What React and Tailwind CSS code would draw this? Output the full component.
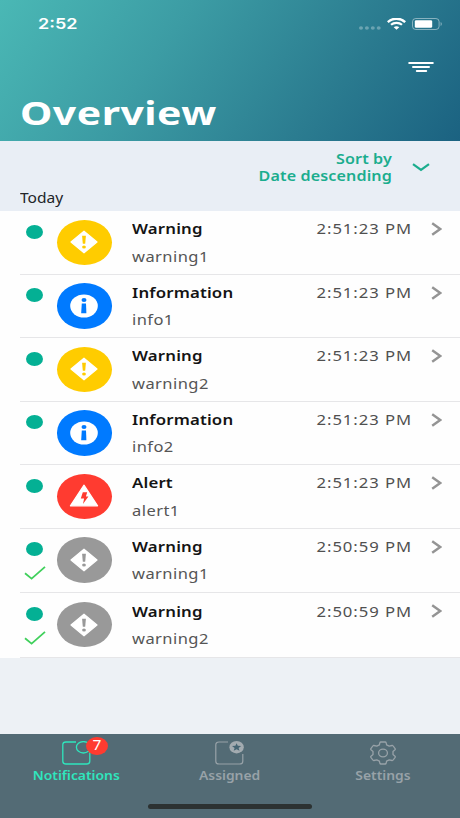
import React, { useState } from 'react';

const notifications = [
  { id: 1, type: 'warning', title: 'Warning', text: 'warning1', time: '2:51:23 PM' },
  { id: 2, type: 'info', title: 'Information', text: 'info1', time: '2:51:23 PM' },
  { id: 3, type: 'warning', title: 'Warning', text: 'warning2', time: '2:51:23 PM' },
  { id: 4, type: 'info', title: 'Information', text: 'info2', time: '2:51:23 PM' },
  { id: 5, type: 'alert', title: 'Alert', text: 'alert1', time: '2:51:23 PM' },
  { id: 6, type: 'done', title: 'Warning', text: 'warning1', time: '2:50:59 PM' },
  { id: 7, type: 'done', title: 'Warning', text: 'warning2', time: '2:50:59 PM' },
];

const badgeColors = {
  warning: 'bg-[#ffcc00] text-[#ffcc00]',
  info: 'bg-[#007aff] text-[#007aff]',
  alert: 'bg-[#ff3b30] text-[#ff3b30]',
  done: 'bg-[#999999] text-[#999999]',
};

function BadgeIcon({ type }) {
  if (type === 'info') {
    return (
      <svg width="28" height="24" viewBox="0 0 28 24">
        <ellipse cx="14" cy="12" rx="13.8" ry="11.5" fill="#fff" />
        <ellipse cx="14" cy="6.1" rx="2.5" ry="2" fill="currentColor" />
        <path d="M11.8 9.4h4.2l.4 9.9h-5.2z" fill="currentColor" />
      </svg>
    );
  }
  if (type === 'alert') {
    return (
      <svg width="30" height="24" viewBox="0 0 30 24">
        <path d="M15 1.2 28.6 21.8H1.4z" fill="#fff" stroke="#fff" strokeWidth="1.2" strokeLinejoin="round" />
        <path d="M13.8 8.2h4.4l-1.3 4.2h2.5l-5.4 7.6 1.1-5.6h-3.3z" fill="currentColor" />
      </svg>
    );
  }
  return (
    <svg width="28" height="24" viewBox="0 0 28 24">
      <path d="M14 1.2 27 12 14 22.8 1 12z" fill="#fff" stroke="#fff" strokeWidth="1.2" strokeLinejoin="round" />
      <path d="M12.1 5.8h3.8l-.7 8h-2.4z" fill="currentColor" />
      <ellipse cx="14" cy="16.9" rx="1.9" ry="1.5" fill="currentColor" />
    </svg>
  );
}

function StatusBar() {
  return (
    <div className="flex items-center justify-between pt-[14px] pl-[38px] pr-[17px] h-[34px] text-white">
      <span className="inline-block origin-left scale-x-[1.2] font-['Inter',sans-serif] text-[15px] leading-5 font-semibold">2:52</span>
      <div className="flex items-center">
        <svg width="22" height="4" viewBox="0 0 22 4" className="mt-[7px] mr-[6px]" fill="#fff" opacity="0.3">
          <ellipse cx="2" cy="2" rx="2" ry="1.7" />
          <ellipse cx="7.9" cy="2" rx="2" ry="1.7" />
          <ellipse cx="13.8" cy="2" rx="2" ry="1.7" />
          <ellipse cx="19.7" cy="2" rx="2" ry="1.7" />
        </svg>
        <svg width="19" height="12" viewBox="0 0 19 12" className="mr-[6px]" fill="none" stroke="#fff">
          <path d="M.8 4.1C5.6-.4 13.4-.4 18.2 4.1" strokeWidth="2.4" />
          <path d="M4 6.8c3-2.7 8-2.7 11 0" strokeWidth="2.2" />
          <path d="M6.7 9.3c1.6-1.4 4-1.4 5.6 0L9.5 11.7z" fill="#fff" stroke="none" />
        </svg>
        <svg width="31" height="12" viewBox="0 0 31 12">
          <rect x=".5" y=".5" width="26.6" height="11" rx="3.2" fill="none" stroke="#fff" strokeOpacity=".45" />
          <rect x="2.8" y="2.2" width="17.4" height="7.6" rx="1.4" fill="#fff" />
          <path d="M28.6 4v4c1.6-.6 1.6-3.4 0-4z" fill="#fff" fillOpacity=".45" />
        </svg>
      </div>
    </div>
  );
}

function NotificationRow({ item }) {
  const done = item.type === 'done';
  return (
    <li className={`flex pl-5 ${done ? 'h-[64.75px]' : 'h-[63.5px]'}`}>
      <div className="flex flex-1 border-b border-[#e6e6e8]">
        <div className="flex w-[29px] flex-col items-center pt-[13.5px]">
          <span className="h-[14px] w-[17px] rounded-[50%] bg-[#04b094]" />
          {done && (
            <svg width="22" height="14" viewBox="0 0 22 14" className="mt-[10px]" fill="none" stroke="#40d05c" strokeWidth="1.8">
              <path d="M1 7.2l6.6 5.4L21 .9" />
            </svg>
          )}
        </div>
        <div className={`mt-[8.5px] ml-[7.5px] flex h-[45.5px] w-[55.5px] items-center justify-center rounded-[50%] ${badgeColors[item.type]}`}>
          <BadgeIcon type={item.type} />
        </div>
        <div className="ml-[19.5px] flex flex-1 flex-col pt-[6.3px]">
          <span className="origin-left scale-x-[1.12] text-[15px] leading-[22px] font-semibold tracking-[0.15px] text-[#141414]">{item.title}</span>
          <span className="mt-[5.5px] origin-left scale-x-[1.1] text-[15px] leading-[22px] tracking-[0.4px] text-[#555555]">{item.text}</span>
        </div>
        <span className="mt-[6.3px] origin-right scale-x-[1.15] text-[14.5px] leading-[22px] tracking-[0.8px] text-[#505050]">{item.time}</span>
        <svg width="11" height="14" viewBox="0 0 11 14" className="mt-[11px] mr-[18.5px] ml-[19px]" fill="none" stroke="#949494" strokeWidth="2.4">
          <path d="M1.2 1.2 9.2 7l-8 5.8" />
        </svg>
      </div>
    </li>
  );
}

function NotificationsIcon() {
  return (
    <div className="relative h-[24px] w-[29px]">
      <svg width="29" height="24" viewBox="0 0 29 24" fill="none" stroke="currentColor" strokeWidth="1.3">
        <path d="M14 1H4C2 1 .8 2 .8 3.8v16.4C.8 22 2 23 4 23h20.6c2 0 3.200-1 3.200-2.800V11" />
        <ellipse cx="21.4" cy="6.3" rx="7" ry="5.7" />
      </svg>
      <span className="absolute -top-[4.5px] left-[24px] flex h-[18.5px] w-[22px] items-center justify-center rounded-[50%] bg-[#ff3b30] text-[13.5px] leading-none text-white">
        <span className="inline-block scale-x-[1.15]">7</span>
      </span>
    </div>
  );
}

function AssignedIcon() {
  return (
    <svg width="29" height="24" viewBox="0 0 29 24" fill="none" stroke="currentColor" strokeWidth="1.2">
      <path d="M13 1H4C2 1 .8 2 .8 3.8v16.4C.8 22 2 23 4 23h20.600c2 0 3.200-1 3.200-2.800V13" />
      <ellipse cx="21.6" cy="6.2" rx="7.2" ry="6.2" fill="#a3abb0" stroke="none" />
      <path d="M21.6 2.2l1.200 2.600 3.400.2-2.600 1.900.9 2.900-2.900-1.600-2.900 1.600.9-2.900-2.600-1.900 3.400-.2z" fill="#466573" stroke="none" />
    </svg>
  );
}

function SettingsIcon() {
  return (
    <svg width="28" height="24" viewBox="0 0 28 24" fill="none" stroke="currentColor" strokeWidth="1.3" strokeLinejoin="round">
      <path d="M11.8 1h4.4q.7 0 .9.700l.5 2.100 2.600 1.300 2.900-.6q.7-.1 1.100.5l1.900 2.700q.4.600-.1 1.100L24 10.500v3l2 1.700q.5.500.1 1.100L24.200 19q-.4.600-1.100.5l-2.900-.6-2.600 1.300-.5 2.100q-.2.700-.9.700h-4.400q-.7 0-.9-.7l-.5-2.100-2.600-1.300-2.900.6q-.7.100-1.100-.5l-1.900-2.700q-.4-.6.1-1.100l2-1.700v-3l-2-1.700q-.5-.5-.1-1.100L3.800 5q.4-.6 1.100-.5l2.900.6 2.600-1.300.5-2.100q.2-.7.9-.7z" />
      <ellipse cx="14" cy="12" rx="4.4" ry="3.8" />
    </svg>
  );
}

const tabs = [
  { id: 'notifications', label: 'Notifications', Icon: NotificationsIcon },
  { id: 'assigned', label: 'Assigned', Icon: AssignedIcon },
  { id: 'settings', label: 'Settings', Icon: SettingsIcon },
];

function App() {
  const [activeTab, setActiveTab] = useState('notifications');

  return (
    <div className="flex h-[818px] w-[460px] flex-col overflow-hidden bg-[#edf1f5] font-['Noto_Sans',sans-serif]">
      <header className="h-[141px] bg-[linear-gradient(125deg,#4ab8b5_0%,#3c9ca4_35%,#2b7c90_70%,#1b6281_100%)]">
        <StatusBar />
        <div className="flex justify-end pt-[28px] pr-[26px]">
          <svg width="26" height="11" viewBox="0 0 26 11" fill="none" stroke="#fff" strokeWidth="2" strokeLinecap="round">
            <path d="M1.2 1h23.6M5 5h16M8.8 9h9.4" />
          </svg>
        </div>
        <h1 className="mt-[18px] ml-[20px] inline-block origin-left scale-x-[1.24] text-[33px] leading-[44px] font-bold tracking-[0.4px] text-white">Overview</h1>
      </header>

      <section className="flex h-[70px] flex-col bg-[#e9eef5]">
        <div className="flex justify-end pt-[8.5px] pr-[30px] text-[#1bad8e]">
          <p className="origin-right scale-x-[1.15] text-right text-[14px] leading-[17px] font-semibold tracking-[0.1px]">
            Sort by
            <br />
            Date descending
          </p>
          <svg width="18" height="9" viewBox="0 0 18 9" className="mt-[13px] ml-[20px]" fill="none" stroke="currentColor" strokeWidth="2.2">
            <path d="M1 1.2l8 5.8 8-5.8" />
          </svg>
        </div>
        <span className="mt-[4px] ml-[20px] origin-left scale-x-[1.11] text-[14px] leading-5 text-[#222528]">Today</span>
      </section>

      <ul className="bg-[#fefefe]">
        {notifications.map((item) => (
          <NotificationRow key={item.id} item={item} />
        ))}
      </ul>

      <nav className="mt-auto flex h-[84px] flex-col items-center bg-[#536b75]">
        <div className="grid w-full grid-cols-3 pt-[7px]">
          {tabs.map(({ id, label, Icon }) => (
            <button
              key={id}
              type="button"
              onClick={() => setActiveTab(id)}
              className={`flex flex-col items-center ${activeTab === id ? 'text-[#2fe6bd]' : 'text-[#98a2a8]'}`}
            >
              <Icon />
              <span className="mt-[2px] scale-x-[1.11] text-[12.5px] leading-[18px] font-semibold">{label}</span>
            </button>
          ))}
        </div>
        <div className="mt-[19px] h-[5px] w-[164px] rounded-full bg-[#2c3232]" />
      </nav>
    </div>
  );
}

export default App;
